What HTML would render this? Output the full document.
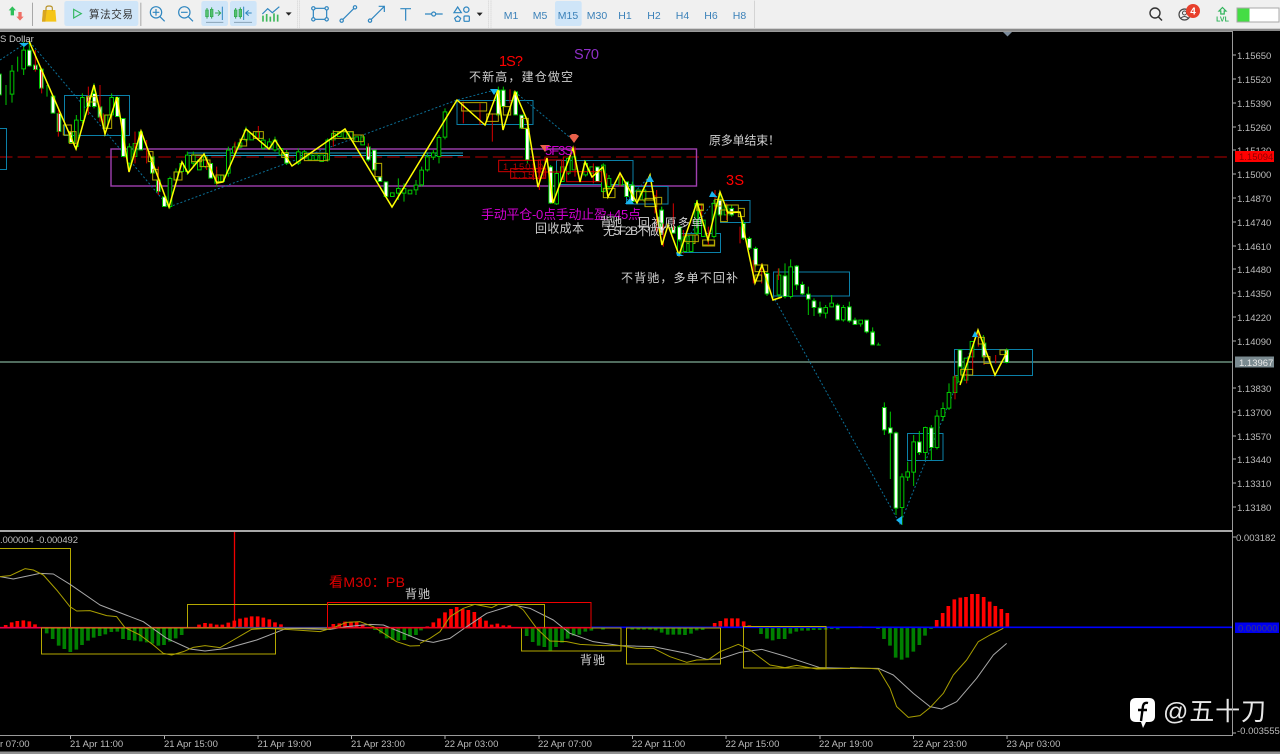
<!DOCTYPE html>
<html lang="zh">
<head>
<meta charset="utf-8">
<title>Chart</title>
<style>
html,body{margin:0;padding:0;background:#000;width:1280px;height:754px;overflow:hidden}
svg{display:block;position:absolute;left:0;top:0;filter:blur(.3px)}
text{font-family:"Liberation Sans","Noto Sans CJK SC",sans-serif}
.co{stroke:#00c800;stroke-width:14;stroke-linecap:square;fill:none}
.ci{stroke:#000;stroke-width:8;stroke-linecap:square;fill:none}
.cw{stroke:#fff;stroke-width:8;stroke-linecap:square;fill:none}
.wk{stroke:#00c800;stroke-width:3;fill:none}
.rd{stroke:#d80000;stroke-width:3;fill:none}
.yb{stroke:#b4a800;stroke-width:3;fill:none}
.hr{stroke:#f00;stroke-width:11;fill:none}
.hg{stroke:#008000;stroke-width:11;fill:none}
.zz{stroke:#ff0;stroke-width:1.5;fill:none;stroke-linejoin:miter}
.dt{stroke:#0b6f96;stroke-width:1;stroke-dasharray:2 2;fill:none}
.bx{stroke:#0b80a8;stroke-width:1;fill:none}
.ax{fill:#bcbcbc;font-size:9.5px}
.w{fill:#cfcfcf;font-size:12px}
.tf{fill:#3a80b8;font-size:10.5px;text-anchor:middle}
.ti{stroke:#2f86c0;stroke-width:3.6;fill:none}
.ym{stroke:#a89e00;stroke-width:3;fill:none;stroke-linejoin:round}
.gm{stroke:#a8a8a8;stroke-width:3;fill:none;stroke-linejoin:round}
</style>
</head>
<body>
<svg width="1280" height="754" viewBox="0 0 1280 754" xmlns="http://www.w3.org/2000/svg">
<rect width="1280" height="754" fill="#000"/>

<!-- toolbar -->
<rect width="1280" height="28" fill="#f0f0f0"/>
<rect y="28" width="1280" height="3" fill="#8a8a8a"/>
<rect y="28" width="1280" height="1" fill="#d0d0d0"/>
<g transform="scale(.33333)">
  <path d="M37 19L26 31H32V46H42V31H48Z" fill="#2fbf5a"/>
  <path d="M60 62L49 50H55V36H65V50H71Z" fill="#ef6f66"/>
  <rect x="96" y="8" width="3" height="70" fill="#a8a8a8"/>
  <path d="M129 30H166L169 65H126Z" fill="#f5c518"/>
  <path d="M129 30H140L136 65H126Z" fill="#d9a520"/>
  <path d="M138 32V24Q138 18 147 18Q157 18 157 24V32" fill="none" stroke="#b9942a" stroke-width="3.5"/>
  <rect x="193" y="3" width="222" height="75" rx="7" fill="#cfe5f8"/>
  <path d="M221 28L244 41L221 54Z" fill="none" stroke="#35b862" stroke-width="3.5"/>
  <rect x="421" y="8" width="3" height="70" fill="#a8a8a8"/>
  <circle cx="468" cy="37" r="17" class="ti"/><path d="M480 50L494 64M458 37H478M468 27V47" class="ti"/>
  <circle cx="553" cy="37" r="17" class="ti"/><path d="M565 50L579 64M543 37H563" class="ti"/>
  <rect x="604" y="3" width="80" height="75" rx="7" fill="#cfe5f8"/>
  <rect x="690" y="3" width="80" height="75" rx="7" fill="#cfe5f8"/>
  <path d="M621 24V56M635 22V56" stroke="#2fa84f" stroke-width="3"/>
  <rect x="617" y="30" width="8" height="20" fill="#55c070" stroke="#2fa84f" stroke-width="2"/>
  <rect x="631" y="28" width="8" height="22" fill="#55c070" stroke="#2fa84f" stroke-width="2"/>
  <path d="M645 39H661M654 31L662 39L654 47" fill="none" stroke="#2fa84f" stroke-width="3"/>
  <path d="M667 20V60" stroke="#2f86c0" stroke-width="3"/>
  <path d="M618 67H670" stroke="#8aa4b8" stroke-width="3"/>
  <path d="M707 24V56M721 22V56" stroke="#2fa84f" stroke-width="3"/>
  <rect x="703" y="30" width="8" height="20" fill="#55c070" stroke="#2fa84f" stroke-width="2"/>
  <rect x="717" y="28" width="8" height="22" fill="#55c070" stroke="#2fa84f" stroke-width="2"/>
  <path d="M755 39H739M746 31L737 39L746 47" fill="none" stroke="#2f86c0" stroke-width="3"/>
  <path d="M731 20V60" stroke="#2f86c0" stroke-width="3"/>
  <path d="M702 67H756" stroke="#8aa4b8" stroke-width="3"/>
  <path d="M789 47V65M800 42V65M811 50V65M822 40V65M833 44V65" stroke="#3fb85c" stroke-width="5"/>
  <path d="M787 42L803 26L817 38L838 20" fill="none" stroke="#2f86c0" stroke-width="3.6"/>
  <path d="M857 37H875L866 47Z" fill="#222"/>
  <path d="M892 2V84M899 2V84" stroke="#c4c4c4" stroke-width="2" stroke-dasharray="3 3"/>
  <rect x="940" y="25" width="40" height="33" class="ti"/>
  <g fill="#f0f0f0" stroke="#2f86c0" stroke-width="3.6"><circle cx="940" cy="25" r="5"/><circle cx="980" cy="25" r="5"/><circle cx="940" cy="58" r="5"/><circle cx="980" cy="58" r="5"/></g>
  <path d="M1029 58L1061 26" class="ti"/><circle cx="1025" cy="62" r="5" class="ti"/><circle cx="1065" cy="22" r="5" class="ti"/>
  <path d="M1114 58L1152 20M1136 19H1153V36" class="ti"/><circle cx="1110" cy="62" r="5" class="ti"/>
  <path d="M1201 26H1233M1217 26V62" class="ti"/>
</g>
<g transform="translate(420 0) scale(.33333)">
  <path d="M15 42H68" class="ti"/><circle cx="41" cy="42" r="6" fill="#f0f0f0" stroke="#2f86c0" stroke-width="3.6"/>
  <path d="M113 21L124 38H102Z" class="ti"/><circle cx="139" cy="29" r="8" class="ti"/>
  <path d="M113 48L122 55L118 64H108L104 55Z" class="ti"/><rect x="132" y="48" width="16" height="16" rx="3" class="ti"/>
  <path d="M170 38H188L179 48Z" fill="#222"/>
  <path d="M206 2V84M213 2V84" stroke="#c4c4c4" stroke-width="2" stroke-dasharray="3 3"/>
  <rect x="405" y="3" width="80" height="75" rx="7" fill="#cfe5f8"/>
  <rect x="1002" y="2" width="3" height="82" fill="#d4d4d4"/>
</g>
<text x="89" y="18" font-size="10.6" fill="#333" textLength="44">算法交易</text>
<text class="tf" x="511" y="19">M1</text><text class="tf" x="540" y="19">M5</text><text class="tf" x="568" y="19">M15</text>
<text class="tf" x="597" y="19">M30</text><text class="tf" x="625" y="19">H1</text><text class="tf" x="654" y="19">H2</text>
<text class="tf" x="682.5" y="19">H4</text><text class="tf" x="711" y="19">H6</text><text class="tf" x="739.5" y="19">H8</text>
<!-- right toolbar -->
<circle cx="1155" cy="13" r="5" fill="none" stroke="#333" stroke-width="1.4"/><path d="M1158.5 17L1162 20.5" stroke="#333" stroke-width="1.5"/>
<circle cx="1184.5" cy="14.5" r="5.5" fill="none" stroke="#444" stroke-width="1.2"/><circle cx="1184.5" cy="13" r="2" fill="none" stroke="#444"/><path d="M1181 18Q1184.5 15 1188 18" fill="none" stroke="#444"/>
<circle cx="1193" cy="11" r="7" fill="#e8402c"/><text x="1193" y="14.5" font-size="10" font-weight="bold" fill="#fff" text-anchor="middle">4</text>
<path d="M1222.5 7.5L1226 11H1224.2V14H1220.8V11H1219Z" fill="none" stroke="#2fb45a" stroke-width="1.2"/>
<text x="1222.5" y="21.5" font-size="7" font-weight="bold" fill="#2fb45a" text-anchor="middle">LVL</text>
<rect x="1237" y="8" width="42" height="14" fill="#fff" stroke="#a8a8a8"/><rect x="1237.5" y="8.5" width="12" height="13" fill="#44dd44"/>

<!-- price pane markers -->
<path d="M0 157H1232" stroke="#7a0000" stroke-width="1.5" stroke-dasharray="12.5 5.1"/>
<path d="M0 362H1232" stroke="#5c7c6c" stroke-width="1.7"/>
<path d="M1003 32H1012L1007.5 36.5Z" fill="#7a8a9a"/>

<rect x="111" y="149" width="585.5" height="37" fill="none" stroke="#a040b0" stroke-width="1.4"/>
<g class="bx">
<rect x="64.5" y="95.5" width="65" height="40"/><rect x="-2" y="128.5" width="8.5" height="41"/>
<rect x="457" y="100.5" width="76" height="24"/><rect x="556.5" y="160.5" width="76.5" height="24"/>
<rect x="626.5" y="186.5" width="41.5" height="17.5"/><rect x="680" y="233.5" width="40.5" height="19"/>
<rect x="720.5" y="200.5" width="29.5" height="22"/><rect x="773.5" y="272" width="76" height="24"/>
<rect x="907.5" y="433.5" width="35.5" height="27"/><rect x="954.5" y="349.5" width="78" height="26"/>
</g>
<path d="M188 153H463M188 155.5H463" stroke="#19a0c8" stroke-width="1"/>

<path class="dt" d="M0 60L29 41L169 207L457 100L495 90M515 92L573 140M650 176L627 200M679 250L720 192M773 296L900 524L978 332"/>

<!-- region 1 candles -->
<g transform="scale(.33333)">
<path class="wk" d="M18 255V315M36 195V308M53 170V215M71 125V225M88 125V200M141 255V290M229 345V450M247 280V370M282 250V325M335 280V350M388 430V515M405 395V480M510 530V625M528 505V545M545 485V520M562 455V525M580 455V500M616 465V505M650 510V560M685 440V530M703 430V470M720 415V445M738 380V425M790 410V450M808 415V450M825 410V455M860 450V495M895 445V495M913 450V480M983 415V485M1000 390V425M1035 385V420M1105 430V485M1195 535V600M1212 550V605M1248 540V585"/>
<g class="co"><path id="h1" d="M36 219V277M71 156V201M229 366V434M247 298V356M318 351V379M335 298V339M388 446V484M405 436V464M510 541V614M528 521V534M545 496V509M562 471V509M580 471V484M598 486V504M616 476V494M650 536V544M668 531V539M685 456V514M703 446V454M720 436V434M738 396V414M755 406V414M773 401V409M790 426V439M808 431V439M825 426V444M843 451V459M860 466V484M895 461V484M913 461V469M930 471V474M948 471V474M965 471V479M983 426V474M1000 406V414M1018 401V404M1035 401V409M1053 401V409M1070 416V419M1088 416V429M1177 584V584M1195 571V574M1212 571V574M1230 576V576M1248 561V564"/></g>
<use href="#h1" class="ci"/>
<g class="co"><path id="w1" d="M-2 228V279M88 156V192M106 203V201M124 213V259M159 294V334M177 346V389M212 401V422M265 296V314M283 286V314M300 326V346M352 298V344M370 361V464M422 401V444M457 476V514M475 546V569M493 596V614M632 496V529M860 466V484M1105 446V474M1123 456V504M1140 536V539M1158 551V584"/></g>
<use href="#w1" class="cw"/>
<path class="rd" d="M106 150V215M125 205V280M175 330V410M265 260V345M300 255V365M310 340V385M405 395V490M440 420V490M475 500V585M620 470V510M650 500V555M705 425V460M775 378V420M1000 395V440M1105 430V470"/>
<path class="yb" d="M190 375h24v30h-24zM208 395h20v35h-20zM260 290h30v16h-30zM315 345h20v40h-20zM445 455h14v30h-14zM458 508h16v32h-16zM522 516h24v24h-24zM575 465h30v20h-30zM600 480h30v20h-30zM648 525h22v20h-22zM720 418h20v20h-20zM760 395h30v20h-30zM845 458h20v14h-20zM913 460h70v22h-70zM1000 395h60v20h-60zM1060 405h30v20h-30zM1125 490h20v40h-20z"/>
</g>

<!-- region 2 candles -->
<g transform="translate(420 0) scale(.33333)">
<path class="wk" d="M5 500V560M22 460V515M40 450V480M57 405V490M75 325V418M235 260V350M250 260V325M322 380V490M392 495V612M410 510V615M445 470V525M497 480V530M550 490V580M567 525V570M637 545V610M672 560V605M725 620V705M778 700V765M830 600V705"/>
<g class="co"><path id="h2" d="M5 516V549M22 476V504M40 466V464M57 418V464M75 341V406M410 526V606M427 506V539M445 481V514M462 476V504M497 496V519M515 506V514M550 501V569M567 541V554M602 536V549M655 576V594M672 576V594M778 716V754M813 711V749M830 616V694"/></g>
<use href="#h2" class="ci"/>
<g class="co"><path id="w2" d="M235 276V339M250 276V314M287 281V339M305 351V379M322 391V474M392 506V604M532 506V539M620 551V584M637 561V599M725 636V694M760 686V694"/></g>
<use href="#w2" class="cw"/>
<path class="rd" d="M130 305V370M180 310V375M217 340V425M270 268V310M340 480V540M358 500V570M375 470V530M430 470V540M465 440V530M520 490V550M560 520V555M600 520V560M705 585V640M730 660V740M790 690V760M845 610V680"/>
<path class="yb" d="M125 308h75v25h-75zM200 342h35v22h-35zM250 320h22v25h-22zM305 355h20v30h-20zM550 565h35v28h-35zM650 575h50v25h-50zM800 705h25v25h-25zM848 720h35v15h-35zM830 612h20v20h-20z"/>
<g fill="none" stroke="#d00000" stroke-width="3"><rect x="236" y="481" width="125" height="34"/><rect x="272" y="506" width="105" height="29"/><rect x="355" y="480" width="70" height="36"/><rect x="440" y="515" width="105" height="30"/></g>
</g>
<text x="503" y="170" font-size="9.5" fill="#b00000" textLength="40">1.15010</text>
<text x="512" y="178" font-size="9.5" fill="#b00000" textLength="34">1.1501</text>

<!-- region 3 candles -->
<g transform="translate(640 170) scale(.33333)">
<path class="wk" d="M65 110V170M118 165V215M172 90V195M222 90V205M240 65V140M275 105V140M310 150V210M328 200V240M347 230V290M381 305V378M417 295V385M435 280V385M452 268V385M470 285V360M487 335V375M505 350V435M522 385V438M540 395V440M557 405V445M575 375V412M593 400V452M610 405V455M628 395V458M645 443V465M662 450V470M680 450V490M698 480V525"/>
<g class="co"><path id="h3" d="M135 206V239M153 201V239M190 156V194M222 106V194M258 111V129M417 321V369M452 296V374M557 418V424M575 405V405M610 418V444M662 456V456"/></g>
<use href="#h3" class="ci"/>
<g class="co"><path id="w3" d="M65 126V154M118 176V204M240 96V129M275 121V129M310 166V199M328 211V229M347 241V279M381 316V366M435 323V374M470 294V339M487 349V366M505 378V382M522 398V407M540 419V424M593 411V444M628 416V447M645 458V456M680 458V479M698 491V516"/></g>
<use href="#w3" class="cw"/>
<path class="rd" d="M50 60V190M100 100V180M205 170V225M225 60V120M260 100V150M300 170V220M340 270V340M365 280V340M415 295V330"/>
<path class="yb" d="M15 85h35v25h-35zM45 82h20v20h-20zM135 195h40v20h-40zM172 105h18v15h-18zM188 210h36v18h-36zM225 88h20v20h-20zM242 120h20v35h-20zM260 105h35v20h-35zM295 115h18v25h-18zM345 285h38v20h-38zM345 315h20v18h-20z"/>
</g>

<!-- region 4 candles -->
<g transform="translate(860 320) scale(.33333)">
<path class="wk" d="M73 247V345M91 275V477M108 335V585M126 460V615M143 425V483M161 345V498M178 333V405M196 320V420M214 315V420M231 270V388M249 247V303M267 190V270M55 68V76M38 22V75M20 0V36M370 45V110M440 85V130"/>
<g class="co"><path id="h4" d="M126 476V557M143 461V466M161 371V451M196 328V392M231 294V377M249 271V284M267 223V259M285 176V212M300 140V180M318 120V175M336 70V105"/></g>
<use href="#h4" class="ci"/>
<g class="co"><path id="w4" d="M73 268V324M91 329V334M108 344V559M178 371V392M214 329V377M38 42V69M20 6V30M300 95V135M372 75V105M440 95V122"/></g>
<use href="#w4" class="cw"/>
<path class="rd" d="M285 165V238M338 90V160M355 40V80M372 105V135M407 105V130M320 150V190"/>
<path class="yb" d="M302 148h36v17h-36zM355 52h18v20h-18zM372 110h18v20h-18zM420 90h20v14h-20z"/>
<path d="M50 75h12" stroke="#00c800" stroke-width="3"/>
</g>

<!-- zigzag -->
<polyline class="zz" points="29,41 76,149 94,85 105,134 117,97 129,172 141,131 169,207 182,162 188,173 204,154 217,183 223,182 246,129 269,149 275,140 292,166 345,129 392,207 457,100 485,125 498,90 503,130 515,92 527,120 538,187 547,158 553,203 573,148 580,182 585,162 592,177 603,167 608,197 620,173 637,203 650,175 662,245 668,225 679,255 697,202 708,240 720,192 728,213 740,212 755,283 762,265 773,300 782,297"/>
<polyline class="zz" points="960,385 978,330 995,375 1007,352"/>

<!-- markers -->
<path d="M19 43H29L24 47Z" fill="#19b5f0"/>
<path d="M490 89H498L494 95Z" fill="#19b5f0"/>
<path d="M569 136L572 134H576L579 136L574 143Z" fill="#e8604a"/>
<path d="M540 145H550L545 152Z" fill="#e8604a"/>
<path d="M650 175L654 182H646Z" fill="#19b5f0"/>
<path d="M676 252L684 256H677Z" fill="#19b5f0"/>
<path d="M625 204L630 198L634 204Z" fill="#19b5f0"/>
<path d="M712 191L717 197H709Z" fill="#19b5f0"/>
<path d="M896 520L902 516V525Z" fill="#19b5f0"/>
<path d="M975 331L978 337H972Z" fill="#19b5f0"/>

<!-- price pane text -->
<text x="0" y="42" font-size="9.5" fill="#c8c8c8">S Dollar</text>
<text x="499" y="66" font-size="14.5" fill="#f00" textLength="24">1S?</text>
<text x="574" y="59" font-size="14.5" fill="#9030c8" textLength="25">S70</text>
<text class="w" x="469" y="81" textLength="104">不新高，建仓做空</text>
<text class="w" x="709" y="144.5" textLength="71">原多单结束！</text>
<text x="726" y="185" font-size="14.5" fill="#f00" textLength="18">3S</text>
<text x="545" y="155" font-size="13" fill="#d000d0" textLength="28">5F3S</text>
<text x="481" y="219" font-size="13" fill="#d000d0" textLength="160">手动平仓-0点手动止盈+45点</text>
<text class="w" x="535" y="232.5" textLength="49">回收成本</text>
<text class="w" x="600" y="226" textLength="22">背驰</text>
<text class="w" x="603" y="235" font-size="13" textLength="63">无5F2B不做Y</text>
<text class="w" x="638" y="227" textLength="65">回补原多单</text>
<text class="w" x="621" y="282" textLength="117">不背驰，多单不回补</text>

<!-- MACD boxes -->
<path d="M0 548.5H70.5V628" stroke="#b4a800" fill="none"/>
<path d="M234.5 531V628" stroke="#f00000" stroke-width="1.3"/>

<g transform="translate(0 525) scale(.33333)">
<path class="hr" d="M17 308V300M35 308V292M52 308V288M70 308V286M88 308V289M105 308V298M597 308V299M615 308V294M632 308V296M650 308V299M667 308V299M685 308V293M703 308V287M720 308V281M738 308V278M755 308V274M773 308V274M790 308V278M808 308V283M825 308V292M843 308V298M1000 308V297M1018 308V295M1035 308V290M1053 308V290M1070 308V290M1088 308V298"/>
<path class="hg" d="M140 308V325M158 308V342M176 308V362M193 308V372M211 308V381M229 308V374M246 308V360M264 308V347M281 308V338M299 308V333M316 308V328M334 308V321M352 308V320M369 308V342M387 308V345M404 308V347M422 308V349M440 308V352M457 308V356M475 308V362M492 308V360M510 308V350M527 308V340M545 308V330M1125 308V315M1143 308V325M1160 308V340M1178 308V345M1195 308V347M1213 308V345M1230 308V335M1248 308V330"/>
<path d="M704 308H1000" stroke="#0000ff" stroke-width="5"/>
<path d="M0 308H704M985 308H1260" stroke="#e8004a" stroke-width="5"/>
<polyline class="gm" points="0,155 40,162 120,145 160,147 210,178 300,240 430,290 500,340 570,372 615,378 680,370 770,345 860,310 990,313 1040,305 1110,298 1150,300 1260,345"/>
<polyline class="ym" points="0,155 30,152 60,138 75,131 100,135 130,150 170,195 210,245 230,258 270,257 320,272 350,275 375,308 420,330 460,360 490,385 515,390 550,380 580,367 615,362 660,368 700,345 755,313 800,310 870,314 960,320 1000,308 1040,292 1080,290 1120,305 1190,350 1230,363 1260,362"/>
</g>
<g transform="translate(420 525) scale(.33333)">
<path class="hr" d="M22 308V304M40 308V292M57 308V280M75 308V262M93 308V252M110 308V246M128 308V252M145 308V255M163 308V261M180 308V278M198 308V287M215 308V299M232 308V296M250 308V301M268 308V301M884 308V294M901 308V288M918 308V280M936 308V280M953 308V280M971 308V289M988 308V301"/>
<path class="hg" d="M3 308V316M320 308V333M338 308V351M356 308V362M373 308V366M391 308V377M408 308V366M426 308V353M443 308V341M461 308V332M478 308V329M496 308V320M514 308V317M549 308V314M637 308V314M655 308V314M672 308V314M690 308V314M707 308V316M725 308V323M743 308V329M760 308V329M778 308V329M795 308V330M813 308V326M830 308V316M848 308V315M1023 308V327M1041 308V341M1058 308V346M1076 308V342M1094 308V342M1111 308V326M1129 308V320M1146 308V317M1164 308V317M1181 308V315M1199 308V315M1217 308V314M1235 308V312M1253 308V313"/>
<path d="M514 307H1290" stroke="#0000ff" stroke-width="5"/>
<path d="M0 308H514" stroke="#e8004a" stroke-width="5"/>
<polyline class="gm" points="0,345 40,352 90,340 130,312 200,265 280,240 330,250 400,285 450,325 520,350 600,362 700,365 800,385 860,403 900,402 960,382 1025,373 1100,395 1200,428 1290,430"/>
<polyline class="ym" points="0,355 30,340 60,320 90,275 130,250 165,238 215,248 235,238 290,240 310,255 350,310 390,348 440,350 480,358 550,362 600,362 650,370 700,370 750,395 800,412 830,405 865,404 900,380 955,358 990,375 1050,420 1095,428 1130,421 1190,432 1290,430"/>
</g>
<g transform="translate(850 525) scale(.33333)">
<path class="hr" d="M31 308V304M260 307V285M278 307V264M295 307V243M313 307V223M331 307V218M348 307V216M366 307V207M383 307V207M401 307V216M419 307V230M436 307V243M454 307V252M472 307V264"/>
<path class="hg" d="M84 307V312M102 307V342M120 307V362M137 307V398M155 307V404M172 307V398M190 307V380M208 307V360M225 307V332M243 307V312"/>
<path d="M0 307H1147" stroke="#0000ff" stroke-width="5"/>
<polyline class="gm" points="0,430 85,430 130,450 190,505 240,545 275,552 320,530 380,460 430,390 470,355"/>
<polyline class="ym" points="0,428 60,430 85,432 120,490 140,545 175,577 210,572 240,548 280,505 310,450 350,405 385,350 420,330 460,310"/>
</g>
<g fill="none" stroke="#b4a800" stroke-width="1">
<rect x="41.5" y="628" width="234" height="26"/>
<rect x="187.5" y="604.5" width="357" height="23.5"/>
<rect x="521.5" y="628" width="99.5" height="23"/>
<rect x="626.5" y="628" width="94" height="36"/>
<rect x="743.5" y="626.5" width="82.5" height="41.5"/>
</g>
<rect x="327.5" y="602.5" width="263.5" height="25.5" fill="none" stroke="#f00000"/>

<text x="0" y="543" class="ax" textLength="78">.000004 -0.000492</text>
<text x="329" y="587" font-size="14" fill="#e00000" textLength="76">看M30：PB</text>
<text class="w" x="405" y="598" textLength="25">背驰</text>
<text class="w" x="580" y="664" textLength="25">背驰</text>

<!-- watermark -->
<path d="M1136 698H1149Q1155 698 1155 704V716Q1155 722 1149 722H1146L1143 728L1141 722H1136Q1130 722 1130 716V704Q1130 698 1136 698Z" fill="#fff"/>
<path d="M1148 703Q1144 702 1143 706L1141 721M1138 710H1147" fill="none" stroke="#000" stroke-width="2.4"/>
<text x="1163" y="720" font-size="25" fill="#e8e8e8" textLength="103">@五十刀</text>

<!-- frame & axes -->
<path d="M0 31.5H1232.5V735.5H0" fill="none" stroke="#9a9a9a" stroke-width="1"/>
<rect y="530" width="1232" height="2" fill="#a8a8a8"/>
<rect y="751.5" width="1280" height="2.5" fill="#8f8f8f"/>
<path d="M1233 55H1236M1233 79H1236M1233 103H1236M1233 127H1236M1233 150H1236M1233 174H1236M1233 198H1236M1233 222H1236M1233 246H1236M1233 269H1236M1233 293H1236M1233 317H1236M1233 341H1236M1233 388H1236M1233 412H1236M1233 436H1236M1233 459H1236M1233 483H1236M1233 507H1236M1233 537H1236M1233 733H1236" stroke="#b0b0b0"/>
<path d="M70.5 736V739M164.5 736V739M258 736V739M351.5 736V739M445 736V739M539 736V739M632.5 736V739M726 736V739M820 736V739M913.5 736V739M1007 736V739" stroke="#b0b0b0"/>
<text class="ax" x="1237" y="59">1.15650</text><text class="ax" x="1237" y="83">1.15520</text><text class="ax" x="1237" y="107">1.15390</text>
<text class="ax" x="1237" y="131">1.15260</text><text class="ax" x="1237" y="154">1.15130</text><text class="ax" x="1237" y="178">1.15000</text>
<text class="ax" x="1237" y="202">1.14870</text><text class="ax" x="1237" y="226">1.14740</text><text class="ax" x="1237" y="250">1.14610</text>
<text class="ax" x="1237" y="273">1.14480</text><text class="ax" x="1237" y="297">1.14350</text><text class="ax" x="1237" y="321">1.14220</text>
<text class="ax" x="1237" y="345">1.14090</text><text class="ax" x="1237" y="392">1.13830</text><text class="ax" x="1237" y="416">1.13700</text>
<text class="ax" x="1237" y="440">1.13570</text><text class="ax" x="1237" y="463">1.13440</text><text class="ax" x="1237" y="487">1.13310</text>
<text class="ax" x="1237" y="511">1.13180</text>
<text class="ax" x="1236" y="541">0.003182</text><text class="ax" x="1237" y="734">-0.003555</text>
<rect x="1235" y="151" width="39" height="11" fill="#f00"/><text x="1239" y="160" font-size="9.5" fill="#8a0000">1.15094</text>
<rect x="1235" y="356.5" width="39" height="11" fill="#7a8a90"/><text x="1239" y="366" font-size="9.5" fill="#e8e8e8">1.13967</text>
<rect x="1235" y="622.5" width="44" height="10.5" fill="#0000f0"/><text x="1238" y="631.5" font-size="9.5" fill="#38387a">0.000000</text>
<text class="ax" x="0" y="747">r 07:00</text><text class="ax" x="70" y="747">21 Apr 11:00</text><text class="ax" x="164" y="747">21 Apr 15:00</text>
<text class="ax" x="257.5" y="747">21 Apr 19:00</text><text class="ax" x="351" y="747">21 Apr 23:00</text><text class="ax" x="444.5" y="747">22 Apr 03:00</text>
<text class="ax" x="538" y="747">22 Apr 07:00</text><text class="ax" x="632" y="747">22 Apr 11:00</text><text class="ax" x="725.5" y="747">22 Apr 15:00</text>
<text class="ax" x="819" y="747">22 Apr 19:00</text><text class="ax" x="913" y="747">22 Apr 23:00</text><text class="ax" x="1006.5" y="747">23 Apr 03:00</text>
</svg>
</body>
</html>
